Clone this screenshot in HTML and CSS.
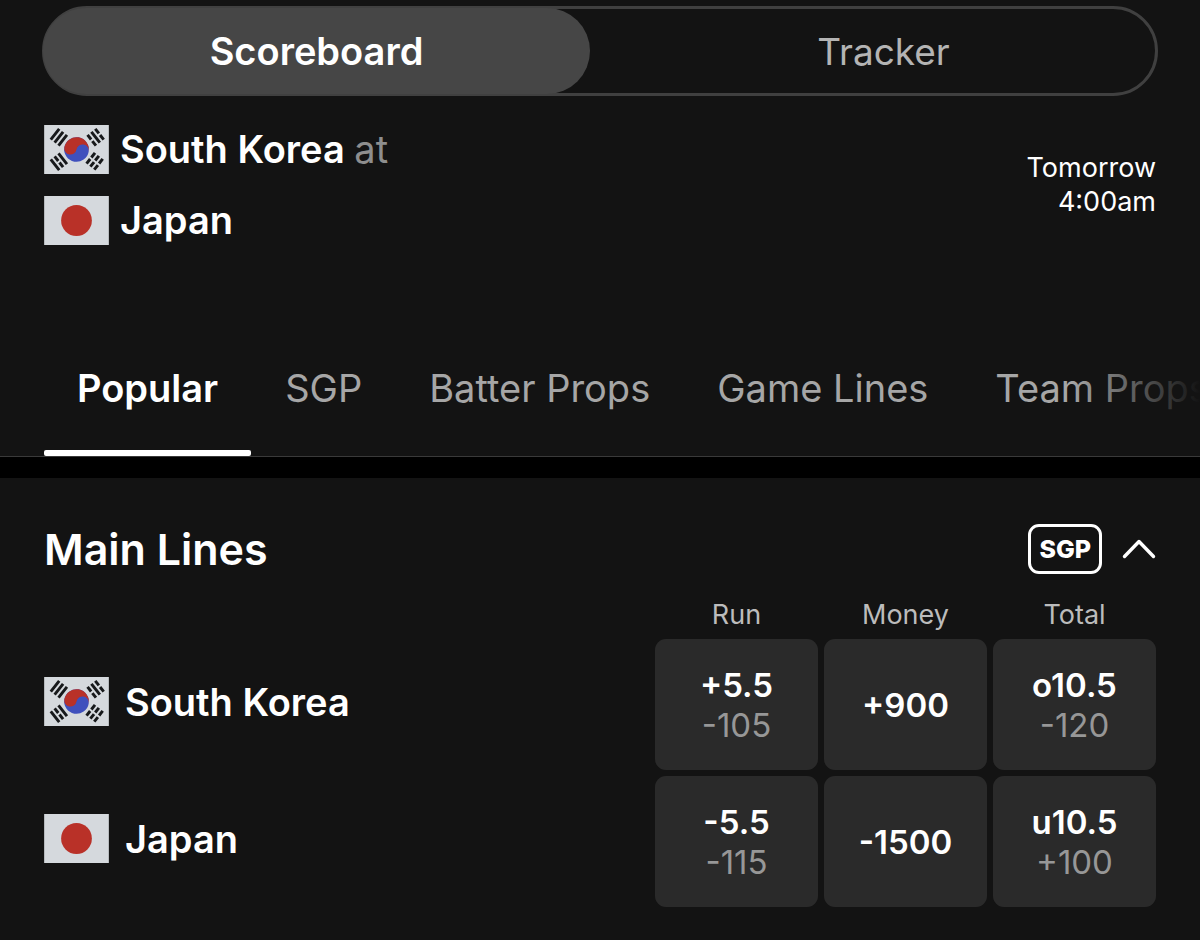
FILE: index.html
```html
<!DOCTYPE html>
<html lang="en">
<head>
<meta charset="utf-8">
<meta name="viewport" content="width=device-width, initial-scale=1">
<title>South Korea at Japan</title>
<link rel="stylesheet" href="styles.css">
</head>
<body>
<svg class="sprite" aria-hidden="true">
  <symbol id="flag-kr" viewBox="0 0 66 50">
    <rect width="66" height="50" fill="#d5d9dd"/>
    <g transform="rotate(10 33 25)">
      <circle cx="33" cy="25" r="12.6" fill="#3f50bd"/>
      <path d="M20.4 25a12.6 12.6 0 0 1 25.2 0a6.3 6.3 0 0 0-12.6 0a6.3 6.3 0 0 1-12.6 0z" fill="#b93128"/>
    </g>
    <g stroke="#17191b" stroke-width="3" fill="none">
      <path transform="translate(15 12.5) rotate(-52)" d="M-7-5h14M-7 0h14M-7 5h14"/>
      <path transform="translate(52.5 12.5) rotate(52)" d="M-7-5h6M1-5h6M-7 0h14M-7 5h6M1 5h6"/>
      <path transform="translate(15 37.5) rotate(52)" d="M-7-5h14M-7 0h6M1 0h6M-7 5h14"/>
      <path transform="translate(51.5 37) rotate(-52)" d="M-7-5h6M1-5h6M-7 0h6M1 0h6M-7 5h6M1 5h6"/>
    </g>
  </symbol>
  <symbol id="flag-jp" viewBox="0 0 66 50">
    <rect width="66" height="50" fill="#d5d9dd"/>
    <circle cx="33" cy="25" r="15.7" fill="#b93128"/>
  </symbol>
</svg>

<header class="event">
  <div class="switch">
    <button class="switch-item is-active" type="button">Scoreboard</button>
    <button class="switch-item" type="button">Tracker</button>
  </div>
  <div class="matchup">
    <div class="teams">
      <div class="team"><svg class="flag" aria-hidden="true"><use href="#flag-kr"/></svg><span>South Korea <span class="at">at</span></span></div>
      <div class="team"><svg class="flag" aria-hidden="true"><use href="#flag-jp"/></svg><span>Japan</span></div>
    </div>
    <div class="start"><div>Tomorrow</div><div>4:00am</div></div>
  </div>
</header>

<nav class="tabs">
  <a class="tab is-active" href="#popular">Popular</a>
  <a class="tab" href="#sgp">SGP</a>
  <a class="tab" href="#batter">Batter Props</a>
  <a class="tab" href="#game">Game Lines</a>
  <a class="tab" href="#team">Team Props</a>
</nav>

<main class="market" id="popular">
  <div class="market-head">
    <h2 class="market-title">Main Lines</h2>
    <span class="badge">SGP</span>
    <button class="collapse" type="button" aria-label="Collapse Main Lines">
      <svg class="chevron" viewBox="0 0 34 20" aria-hidden="true"><path d="M2.5 17.5L17 2.5L31.5 17.5"/></svg>
    </button>
  </div>
  <table class="odds">
    <thead>
      <tr><td></td><th class="col" scope="col">Run</th><th class="col" scope="col">Money</th><th class="col" scope="col">Total</th></tr>
    </thead>
    <tbody>
      <tr>
        <th class="row-head" scope="row"><div class="team team-wide"><svg class="flag" aria-hidden="true"><use href="#flag-kr"/></svg><span>South Korea</span></div></th>
        <td><button class="odd" type="button"><span>+5.5</span><span class="price">-105</span></button></td>
        <td><button class="odd" type="button"><span>+900</span></button></td>
        <td><button class="odd" type="button"><span>o10.5</span><span class="price">-120</span></button></td>
      </tr>
      <tr>
        <th class="row-head" scope="row"><div class="team team-wide"><svg class="flag" aria-hidden="true"><use href="#flag-jp"/></svg><span>Japan</span></div></th>
        <td><button class="odd" type="button"><span>-5.5</span><span class="price">-115</span></button></td>
        <td><button class="odd" type="button"><span>-1500</span></button></td>
        <td><button class="odd" type="button"><span>u10.5</span><span class="price">+100</span></button></td>
      </tr>
    </tbody>
  </table>
</main>
</body>
</html>
```
FILE: styles.css
```css
* {
  box-sizing: border-box;
}

body {
  margin: 0;
  background: #131313;
  color: #fff;
  font-family: Inter, "Liberation Sans", sans-serif;
}

button {
  border: 0;
  padding: 0;
  background: none;
  color: inherit;
  font: inherit;
  cursor: pointer;
}

.sprite {
  position: absolute;
  width: 0;
  height: 0;
}

.event {
  padding: 6px 42px 0;
}

.switch {
  display: flex;
  gap: 24px;
  height: 90px;
  border: 3px solid #404040;
  border-radius: 45px;
  background: #131313;
}

.switch-item {
  flex: 1;
  margin: -1px -2px;
  border-radius: 43px;
  color: #b4b4b4;
  font-size: 37px;
}

.switch-item.is-active {
  background: #464646;
  color: #fff;
  font-size: 38px;
  font-weight: 600;
}

.matchup {
  display: flex;
  align-items: center;
  justify-content: space-between;
  padding: 28px 2px 0;
}

.teams {
  display: grid;
  gap: 21px;
}

.team {
  display: flex;
  align-items: center;
  gap: 11px;
  font-size: 38px;
  font-weight: 600;
  line-height: 50px;
}

.team-wide {
  gap: 16px;
}

.flag {
  flex: none;
  width: 65px;
  height: 49px;
}

.at {
  color: #8e8e8e;
  font-weight: 400;
}

.start {
  font-size: 27px;
  line-height: 34px;
  text-align: right;
}

.tabs {
  display: flex;
  gap: 1px;
  margin-top: 76px;
  padding-left: 44px;
  border-bottom: 1px solid #3a3a3a;
  overflow: hidden;
  white-space: nowrap;
  position: relative;
}

.tabs::after {
  content: "";
  position: absolute;
  top: 0;
  right: 0;
  bottom: 0;
  width: 130px;
  background: linear-gradient(to right, rgba(19, 19, 19, 0), #131313);
}

.tab {
  flex: none;
  padding: 45px 33px 40px;
  border-bottom: 6px solid transparent;
  color: #a6a6a6;
  font-size: 38px;
  line-height: 44px;
  text-decoration: none;
}

.tab.is-active {
  position: relative;
  color: #fff;
  font-weight: 600;
}

.tab.is-active::after {
  content: "";
  position: absolute;
  left: 0;
  right: 0;
  bottom: -6px;
  height: 6px;
  border-radius: 2px;
  background: #fff;
}

.market {
  padding: 46px 38px 27px;
  border-top: 21px solid #000;
}

.market-head {
  display: flex;
  align-items: center;
  padding: 0 6px;
}

.market-title {
  flex: 1;
  margin: 0;
  font-size: 43px;
  font-weight: 600;
  line-height: 50px;
}

.badge {
  padding: 0 8px;
  border: 3px solid #fff;
  border-radius: 11px;
  font-size: 25px;
  font-weight: 800;
  line-height: 44px;
}

.collapse {
  display: flex;
  margin-left: 20px;
}

.chevron {
  width: 34px;
  height: 20px;
  fill: none;
  stroke: #fff;
  stroke-width: 3.4;
  stroke-linecap: round;
  stroke-linejoin: round;
}

.odds {
  width: 100%;
  margin-top: 16px;
  border-spacing: 6px;
}

.odds td,
.odds th {
  padding: 0;
}

.odds .col {
  width: 163px;
  color: #bcbcbc;
  font-size: 27px;
  font-weight: 400;
  line-height: 37px;
}

.odds .row-head {
  padding-bottom: 6px;
  text-align: left;
}

.odd {
  display: flex;
  flex-direction: column;
  align-items: center;
  justify-content: center;
  width: 100%;
  height: 131px;
  border-radius: 11px;
  background: #2a2a2a;
  font-size: 33px;
  font-weight: 600;
  line-height: 40px;
}

.price {
  color: #979797;
  font-weight: 400;
}
```
